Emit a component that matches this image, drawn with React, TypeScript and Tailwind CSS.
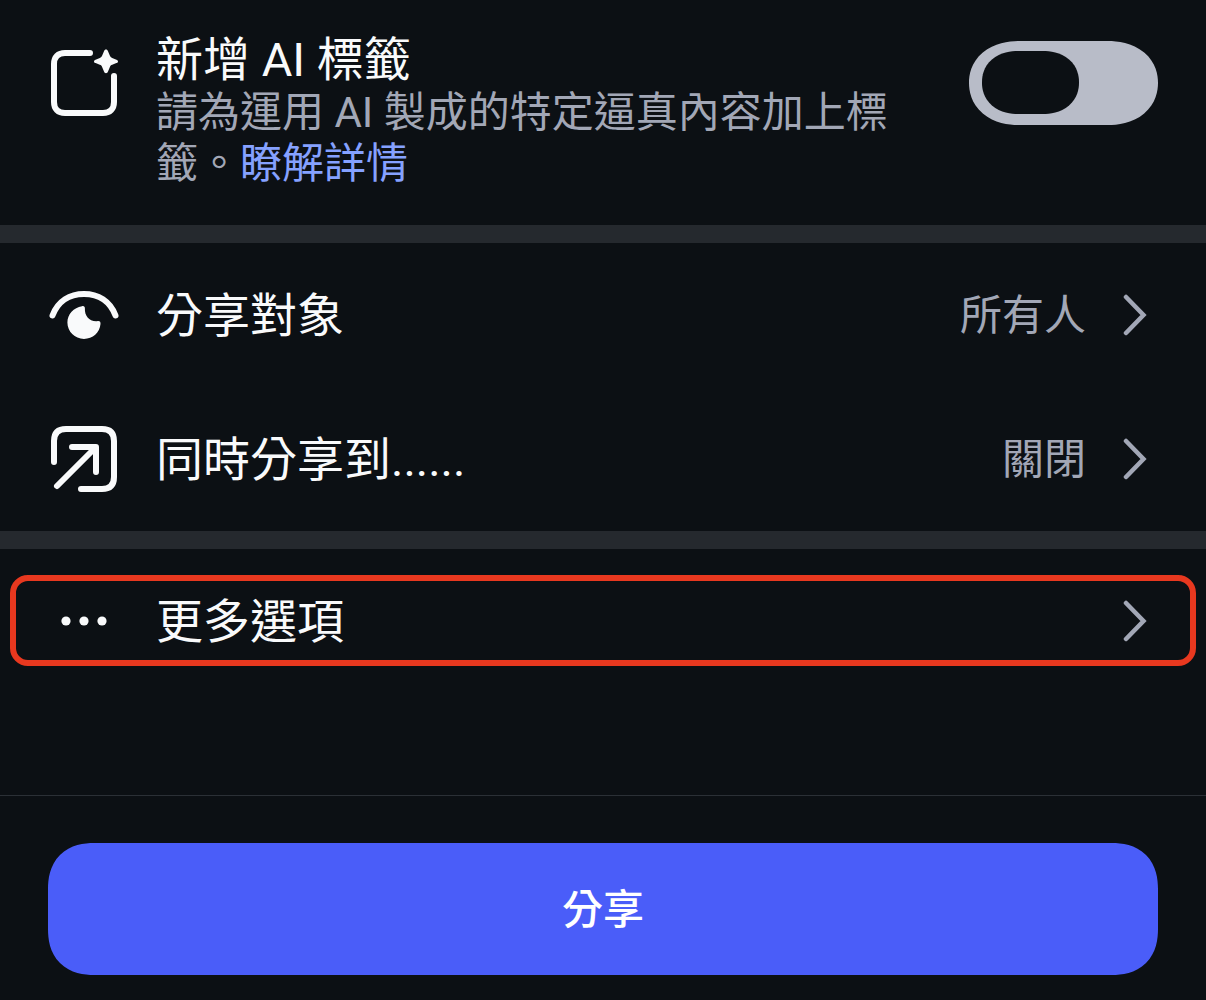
import React, { useState } from 'react';

function LabelIcon() {
  return (
    <svg viewBox="0 0 72 72" className="h-[72px] w-[72px]" fill="none" stroke="currentColor" strokeWidth="6" strokeLinecap="round" strokeLinejoin="round" aria-hidden="true">
      <path d="M42 6H17C10 6 6 10 6 17V55C6 62 10 66 17 66H55C62 66 66 62 66 55V29" />
      <path
        fill="currentColor"
        stroke="none"
        d="M58 2.600C59 2.600 59.600 3.200 60 4.200L61.800 8.600C62.300 9.900 63 10.600 64.200 11L68.400 12.700C69.400 13.100 70 13.600 70 14.400C70 15.200 69.400 15.700 68.400 16.100L64.200 17.800C63 18.200 62.300 18.900 61.800 20.200L60 24.600C59.600 25.600 59 26.200 58 26.200C57 26.200 56.400 25.600 56 24.600L54.200 20.200C53.700 18.900 53 18.200 51.800 17.800L47.600 16.100C46.600 15.700 46 15.200 46 14.400C46 13.600 46.600 13.100 47.600 12.700L51.800 11C53 10.600 53.700 9.900 54.200 8.600L56 4.200C56.400 3.200 57 2.600 58 2.600Z"
      />
    </svg>
  );
}

function AudienceIcon() {
  return (
    <svg viewBox="0 0 72 72" className="h-[72px] w-[72px]" fill="none" aria-hidden="true">
      <path d="M4.500 36.500C10 22 22 15 36 15S62 22 67.500 36.500" stroke="currentColor" strokeWidth="6" strokeLinecap="round" />
      <path
        fill="currentColor"
        d="M34 27.200C36 26.800 37 27.700 36.900 29.500C36.500 36.500 41 42.400 48.500 42.200L50 42.100C52 42 52.700 43 52.500 45C51.800 53.500 44.700 59.900 36 59.900C26.800 59.900 19.400 52.500 19.400 43.500C19.400 35.300 25.700 28.400 34 27.200Z"
      />
    </svg>
  );
}

function ShareToIcon() {
  return (
    <svg viewBox="0 0 72 72" className="h-[72px] w-[72px]" fill="none" stroke="currentColor" strokeWidth="6" strokeLinecap="round" strokeLinejoin="round" aria-hidden="true">
      <path d="M6 39V18C6 10 10 6 18 6H54C62 6 66 10 66 18V54C66 62 62 66 54 66H33" />
      <path d="M9 63L47 25" />
      <path d="M24 24H48V49" />
    </svg>
  );
}

function MoreIcon() {
  return (
    <svg viewBox="0 0 72 72" className="h-[72px] w-[72px]" fill="currentColor" aria-hidden="true">
      <circle cx="18" cy="36" r="4.600" />
      <circle cx="36" cy="36" r="4.600" />
      <circle cx="54" cy="36" r="4.600" />
    </svg>
  );
}

function Chevron() {
  return (
    <svg viewBox="0 0 24 42" className="h-[42px] w-6 shrink-0 text-[#a2a7b6]" fill="none" stroke="currentColor" strokeWidth="4.500" strokeLinecap="round" aria-hidden="true">
      <path d="M3 3L20.500 21L3 39" />
    </svg>
  );
}

interface OptionRowProps {
  icon: React.ReactNode;
  label: string;
  value?: string;
  className: string;
}

function OptionRow({ icon, label, value, className }: OptionRowProps) {
  return (
    <button type="button" className={`flex w-full items-center text-left ${className}`}>
      <span className="shrink-0">{icon}</span>
      <span className="ml-9 flex-1 pt-0.5 text-[47px] leading-[56px]">{label}</span>
      {value && <span className="mr-[37px] pt-0.5 text-[42px] leading-[52px] text-[#a2a7b6]">{value}</span>}
      <Chevron />
    </button>
  );
}

export default function App() {
  const [aiLabel, setAiLabel] = useState(false);

  return (
    <div
      lang="zh-Hant"
      className="flex min-h-screen flex-col bg-[#0c1014] font-['Roboto','Noto_Sans_CJK_TC',sans-serif] text-[#f9fafb]"
    >
      <main>
        {/* AI label */}
        <section className="flex items-start px-12 pt-8 pb-9">
          <div className="mt-[15px] shrink-0">
            <LabelIcon />
          </div>
          <div className="ml-9 flex-1">
            <label htmlFor="ai-label" className="block text-[47px] leading-[55px]">
              新增 AI 標籤
            </label>
            <p className="text-[42px] leading-[51px] text-[#a2a7b6]">
              請為運用 AI 製成的特定逼真內容加上標籤。
              <a href="#learn-more" className="text-[#85a1ff]">瞭解詳情</a>
            </p>
          </div>
          <input
            id="ai-label"
            type="checkbox"
            role="switch"
            checked={aiLabel}
            onChange={(e) => setAiLabel(e.target.checked)}
            className="mt-[9px] ml-12 flex h-[84px] w-[189px] shrink-0 cursor-pointer appearance-none items-center rounded-[50px/42px] bg-[#b8bcc8] px-[13px] pb-px [corner-shape:superellipse(1.1)] before:h-[63px] before:w-[97px] before:rounded-[36px/31px] before:bg-[#0c1014] before:[corner-shape:superellipse(1.1)] checked:justify-end"
          />
        </section>

        {/* Audience and cross-posting */}
        <section className="border-y-[18px] border-[#25292e]">
          <OptionRow icon={<AudienceIcon />} label="分享對象" value="所有人" className="h-36 pr-[59px] pl-12" />
          <OptionRow icon={<ShareToIcon />} label="同時分享到......" value="關閉" className="h-36 pr-[59px] pl-12" />
        </section>

        <section className="px-[10px] py-[26px]">
          <OptionRow
            icon={<MoreIcon />}
            label="更多選項"
            className="h-[91px] rounded-[18px] border-[6px] border-[#e8381f] pr-[43px] pl-8"
          />
        </section>
      </main>

      <footer className="mt-auto border-t border-[#2b3036] px-12 pt-[47px] pb-[25px]">
        <button
          type="button"
          className="h-[132px] w-full rounded-[46px] bg-[#4a5df9] pt-1 text-[41px] font-medium text-white [corner-shape:superellipse(1.2)]"
        >
          分享
        </button>
      </footer>
    </div>
  );
}
